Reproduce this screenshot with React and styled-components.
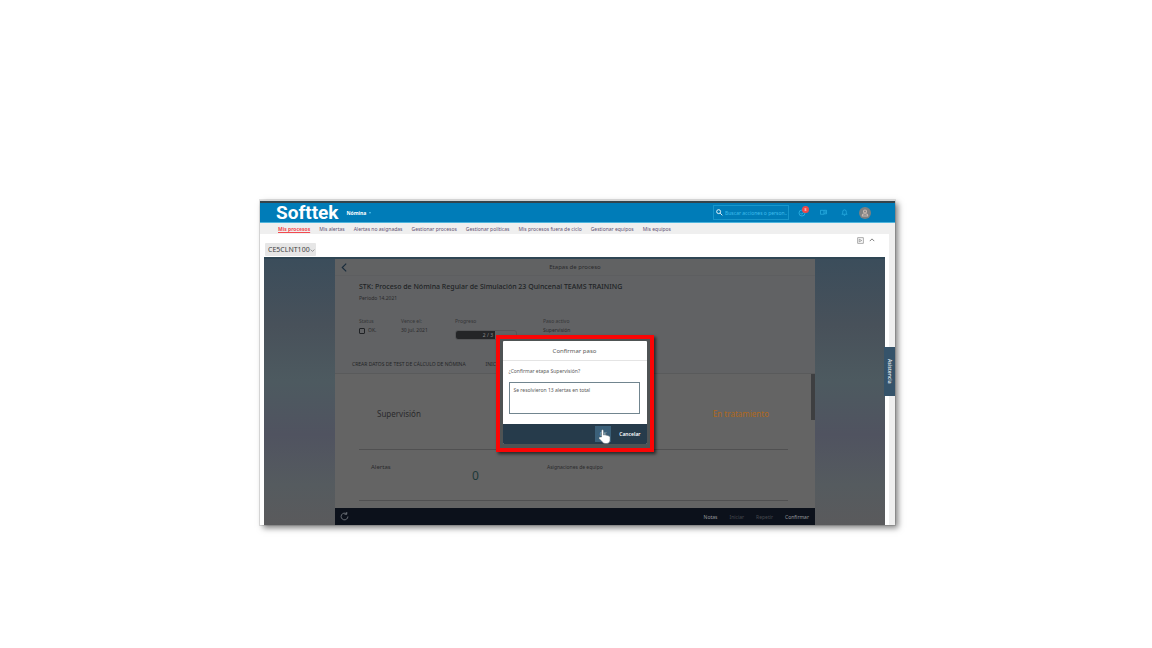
import React from "react";
import styled, { createGlobalStyle } from "styled-components";

const GlobalStyle = createGlobalStyle`
  * { box-sizing: border-box; }
  body { margin: 0; background: #fff; font-family: "Noto Sans", sans-serif; font-size: 5px; line-height: 8px; }
  button, input, textarea, select { font: inherit; color: inherit; margin: 0; }
  h1, h2, h3, p, dl, dd, dt { margin: 0; font-weight: 400; }
`;

const Page = styled.main`padding: 200px 257px 124px 260px;`;

const Frame = styled.div`
  position: relative;
  background: #efefef;
  border-top: 1px solid #d5d5d5;
  box-shadow: 3px 3px 6px rgba(0, 0, 0, 0.5), 0 0 0 1px #e4e4e4;
`;

const TopBar = styled.header`
  display: flex;
  align-items: center;
  height: 22px;
  padding: 0 25px 0 16px;
  border-top: 2px solid #35444c;
  border-bottom: 1px solid #4fb4dc;
  background: #007cb8;
  color: #fff;
`;

const Logo = styled.a`
  color: #fff;
  font: 700 19px/18px Roboto, sans-serif;
  text-decoration: none;
`;

const ModuleButton = styled.button`
  display: flex;
  align-items: center;
  gap: 3px;
  margin-left: 8px;
  padding: 0;
  border: 0;
  background: none;
  font-weight: 700;
  &::after {
    content: "";
    border: 1px solid transparent;
    border-top: 2px solid #55c5f0;
    border-bottom: 0;
  }
`;

const SearchBox = styled.label`
  display: flex;
  align-items: center;
  gap: 2px;
  width: 76px;
  height: 15px;
  margin-left: auto;
  padding: 0 1px 0 2px;
  border: 1px solid #1896cc;
  input {
    flex: 1;
    min-width: 0;
    padding: 0;
    border: 0;
    outline: 0;
    background: none;
  }
  input::placeholder { color: #3fbdec; opacity: 1; }
`;

const IconGroup = styled.div`
  display: flex;
  align-items: center;
  gap: 11px;
  margin-left: 8px;
`;

const IconButton = styled.button`
  position: relative;
  display: flex;
  align-items: center;
  justify-content: center;
  width: 10px;
  height: 12px;
  padding: 0;
  border: 0;
  background: none;
  color: ${(p) => p.$tone || "#2fb4e6"};
  svg { flex: none; }
`;

const Badge = styled.span`
  position: absolute;
  top: -1px;
  right: -2px;
  width: 7px;
  height: 7px;
  border-radius: 50%;
  background: #f04848;
  color: #fff;
  font-size: 4px;
  line-height: 7px;
`;

const MainNav = styled.nav`
  display: flex;
  gap: 9px;
  height: 11px;
  padding: 2px 18px;
`;

const NavLink = styled.a`
  color: ${(p) => (p.$active ? "#f24a50" : "#5f5273")};
  font-weight: ${(p) => (p.$active ? 700 : 400)};
  text-decoration: ${(p) => (p.$active ? "underline" : "none")};
  white-space: nowrap;
`;

const Content = styled.section`
  margin-right: 6px;
  padding-right: 4px;
  padding-left: 4px;
  background: #fff;
`;

const Tools = styled.div`
  display: flex;
  align-items: flex-end;
  justify-content: space-between;
  height: 23px;
  padding: 0 8px 1px 1px;
`;

const ClientSelect = styled.select`
  appearance: none;
  width: 51px;
  height: 13px;
  padding: 0 3px;
  border: 0;
  border-radius: 1px;
  background: #e6e6e6;
  color: #444;
  font-size: 7px;
  line-height: 13px;
`;

const SelectWrap = styled.label`
  position: relative;
  display: flex;
  svg { position: absolute; right: 1px; top: 5px; }
`;

const ToolButtons = styled.div`
  display: flex;
  align-self: flex-start;
  gap: 2px;
`;

const Workspace = styled.div`
  position: relative;
  padding: 0 70px 0 71px;
  border-top: 2px solid #2f4654;
  background: linear-gradient(#3b4d5b, #48515a 25%, #4d5a60 46%, #505360 66%, #555b5f 85%, #5a5a5c);
`;

const Panel = styled.article`
  background: #646464;
  color: #2a2a2c;
`;

const PanelBar = styled.header`
  display: grid;
  grid-template-columns: 10px 1fr 10px;
  align-items: center;
  height: 17px;
  padding: 0 4px;
  border-bottom: 1px solid #5d5e60;
  background: #616263;
  text-align: center;
  h2 { font-size: 6px; }
`;

const Summary = styled.div`
  height: 98px;
  padding: 5px 24px;
  background: #616264;
  h1 { font-size: 7px; font-weight: 500; line-height: 12px; color: #202225; }
  p { line-height: 10px; }
`;

const Facts = styled.dl`
  display: grid;
  grid-template-columns: 42px 54px 88px 1fr;
  margin-top: 14px;
  dt { color: #353638; }
  dt, dd { line-height: 9px; }
`;

const Status = styled.label`
  display: flex;
  align-items: center;
  gap: 3px;
  input {
    appearance: none;
    width: 6px;
    height: 6px;
    border: 1px solid #202225;
    border-radius: 1px;
  }
`;

const Progress = styled.div`
  width: 62px;
  height: 10px;
  margin-top: 4px;
  border: 1px solid #555658;
  border-radius: 3px;
  overflow: hidden;
  div {
    width: 65%;
    height: 100%;
    padding-right: 2px;
    background: #242527;
    color: #8a8b8d;
    line-height: 8px;
    text-align: right;
  }
`;

const Steps = styled.nav`
  display: flex;
  gap: 20px;
  height: 18px;
  margin-top: -18px;
  padding: 4px 17px;
  border-bottom: 1px solid #595a5b;
  a { color: #242527; text-decoration: none; white-space: nowrap; }
`;

const Details = styled.div`
  position: relative;
  height: 134px;
  padding: 0 27px 0 24px;
`;

const StageRow = styled.div`
  display: flex;
  align-items: center;
  justify-content: space-between;
  height: 76px;
  padding: 4px 19px 0 18px;
  border-bottom: 1px solid #505051;
  font-size: 8px;
  line-height: 12px;
  strong { color: #b0681a; font-weight: 400; }
`;

const AlertRow = styled.div`
  display: grid;
  grid-template-columns: 101px 75px 1fr;
  height: 51px;
  padding: 13px 12px 0;
  border-bottom: 1px solid #505051;
  h3 { font-size: 6px; }
  output { margin-top: 6px; color: #1d3838; font-size: 12px; line-height: 14px; }
`;

const ScrollThumb = styled.span`
  position: absolute;
  top: 0;
  right: 0;
  width: 4px;
  height: 46px;
  background: #3e3f41;
`;

const Footer = styled.footer`
  display: flex;
  align-items: center;
  gap: 12px;
  height: 17px;
  padding: 0 6px 0 4px;
  background: #0c111b;
  button:nth-child(2) { margin-left: auto; }
`;

const TextButton = styled.button`
  padding: 0;
  border: 0;
  background: none;
  color: ${(p) => (p.disabled ? "#484a50" : "#96989c")};
`;

const Highlight = styled.div`
  position: absolute;
  top: 76px;
  left: 50%;
  width: 158px;
  margin-left: -79px;
  padding: 2px 3px 4px;
  border: 4px solid #fb0505;
  background: #4e5354;
  box-shadow: 2px 2px 3px rgba(0, 0, 0, 0.6);
`;

const Dialog = styled.section`
  background: #fff;
  border-radius: 1px;
  color: #5a5a5a;
  overflow: hidden;
  h2 {
    height: 20px;
    border-bottom: 1px solid #e4e4e4;
    font-size: 6px;
    line-height: 20px;
    text-align: center;
  }
`;

const DialogBody = styled.div`
  height: 63px;
  padding: 6px 7px 6px 6px;
  label { display: block; }
  textarea {
    display: block;
    width: 100%;
    height: 32px;
    margin-top: 7px;
    padding: 3px 4px;
    border: 1px solid #71858f;
    outline: 0;
    background: #fff;
    resize: none;
  }
`;

const DialogActions = styled.div`
  display: flex;
  align-items: center;
  justify-content: flex-end;
  gap: 8px;
  height: 20px;
  padding: 0 6px;
  background: #263b4b;
  color: #fff;
`;

const DialogButton = styled.button`
  position: relative;
  height: 16px;
  padding: 0;
  border: 0;
  background: ${(p) => (p.$primary ? "#3b6079" : "none")};
  color: ${(p) => (p.$primary ? "#a9c4d6" : "#fff")};
  width: ${(p) => (p.$primary ? "16px" : "auto")};
  font-weight: ${(p) => (p.$primary ? 400 : 600)};
  svg { position: absolute; left: 3px; top: 3px; }
`;

const AlertsTab = styled.button`
  position: absolute;
  top: 146px;
  right: 0;
  display: flex;
  align-items: center;
  justify-content: center;
  width: 11px;
  height: 49px;
  padding: 0;
  border: 0;
  background: #35536a;
  color: #e8eef2;
  font-weight: 600;
  writing-mode: vertical-rl;
`;

const Svg = ({ size = 7, children, ...rest }) => (
  <svg width={size} height={size} viewBox="0 0 16 16" fill="none" stroke="currentColor" strokeWidth="1.6" aria-hidden="true" {...rest}>
    {children}
  </svg>
);

const navItems = ["Mis procesos", "Mis alertas", "Alertas no asignadas", "Gestionar procesos", "Gestionar políticas", "Mis procesos fuera de ciclo", "Gestionar equipos", "Mis equipos"];

const caretToEnd = (e) => e.target.setSelectionRange(e.target.value.length, e.target.value.length);

export default function App() {
  return (
    <Page>
      <GlobalStyle />
      <Frame>
        <TopBar>
          <Logo href="#">Softtek</Logo>
          <ModuleButton>Nómina</ModuleButton>
          <SearchBox>
            <Svg stroke="#fff" strokeWidth="2"><circle cx="6" cy="6" r="4.5" /><path d="m9.5 9.5 5 5" /></Svg>
            <input type="text" aria-label="Buscar" placeholder="Buscar acciones o person..." />
          </SearchBox>
          <IconGroup>
            <IconButton aria-label="Tareas"><Svg size={8}><circle cx="8" cy="8" r="6" /><path d="m5 8 2.500 2.500L11.500 6" /></Svg><Badge>3</Badge></IconButton>
            <IconButton aria-label="Mensajes"><Svg><path d="M1 3h8v9H1zM9 3h6v8H9M11 6h2M11 8h2" /></Svg></IconButton>
            <IconButton aria-label="Notificaciones"><Svg><path d="M2 12h12c-2-2-2-4-2-6a4 4 0 0 0-8 0c0 2 0 4-2 6zM6.500 14.500h3" /></Svg></IconButton>
            <IconButton aria-label="Perfil"><Svg size={12}><circle cx="8" cy="8" r="8" fill="#7d8082" stroke="none" /><circle cx="8" cy="6" r="2" stroke="#c9b8b0" /><path d="M4.500 12V11q0-2 3.500-2t3.500 2v1z" stroke="#c9b8b0" /></Svg></IconButton>
          </IconGroup>
        </TopBar>
        <MainNav>
          {navItems.map((item, i) => <NavLink key={item} href="#" $active={i === 0}>{item}</NavLink>)}
        </MainNav>
        <Content>
          <Tools>
            <SelectWrap>
              <ClientSelect aria-label="Cliente"><option>CE5CLNT100</option></ClientSelect>
              <Svg size={5} stroke="#666" strokeWidth="2"><path d="m2 5 6 6 6-6" /></Svg>
            </SelectWrap>
            <ToolButtons>
              <IconButton aria-label="Abrir" $tone="#858585"><Svg><path d="M1.500 1.500h13v13h-13zM5 5l6 3-6 3z" /></Svg></IconButton>
              <IconButton aria-label="Contraer" $tone="#777"><Svg size={6} strokeWidth="2.500"><path d="m2 11 6-6 6 6" /></Svg></IconButton>
            </ToolButtons>
          </Tools>
          <Workspace>
            <Panel>
              <PanelBar>
                <IconButton aria-label="Volver" $tone="#182b3b"><Svg size={9} strokeWidth="2"><path d="M11 1 4 8l7 7" /></Svg></IconButton>
                <h2>Etapas de proceso</h2>
              </PanelBar>
              <Summary>
                <h1>STK: Proceso de Nómina Regular de Simulación 23 Quincenal TEAMS TRAINING</h1>
                <p>Periodo 14.2021</p>
                <Facts>
                  <div><dt>Status</dt><dd><Status><input type="checkbox" />OK.</Status></dd></div>
                  <div><dt>Vence el:</dt><dd>30 jul. 2021</dd></div>
                  <div><dt>Progreso</dt><dd><Progress><div>2 / 3</div></Progress></dd></div>
                  <div><dt>Paso activo</dt><dd>Supervisión</dd></div>
                </Facts>
              </Summary>
              <Steps>
                <a href="#">CREAR DATOS DE TEST DE CÁLCULO DE NÓMINA</a>
                <a href="#">INICIAR</a>
              </Steps>
              <Details>
                <StageRow><span>Supervisión</span><strong>En tratamiento</strong></StageRow>
                <AlertRow><h3>Alertas</h3><output>0</output><p>Asignaciones de equipo</p></AlertRow>
                <ScrollThumb />
              </Details>
              <Footer>
                <IconButton aria-label="Actualizar" $tone="#777b82"><Svg size={9} strokeWidth="1.500"><path d="M14 8a6 6 0 1 1-2-4.500M12 0v4H8" /></Svg></IconButton>
                <TextButton>Notas</TextButton>
                <TextButton disabled>Iniciar</TextButton>
                <TextButton disabled>Repetir</TextButton>
                <TextButton>Confirmar</TextButton>
              </Footer>
            </Panel>
            <Highlight>
              <Dialog role="dialog" aria-labelledby="confirm-title">
                <h2 id="confirm-title">Confirmar paso</h2>
                <DialogBody>
                  <label htmlFor="note">¿Confirmar etapa Supervisión?</label>
                  <textarea id="note" autoFocus spellCheck={false} onFocus={caretToEnd} defaultValue="Se resolvieron 13 alertas en total" />
                </DialogBody>
                <DialogActions>
                  <DialogButton $primary>OK
                    <svg width="13" height="15" viewBox="0 0 13 15" aria-hidden="true"><path d="M3.500 8V2q0-1.500 1-1.500t1 1.500v4q2-.8 2.500.3 1.500-.5 2 .5 2-.3 2 1.500v3q0 3-3 3.200H7q-2 0-3-2L1 9.500q-.5-1.500.8-1.500z" fill="#fff" stroke="#55656f" strokeWidth=".5" /></svg>
                  </DialogButton>
                  <DialogButton>Cancelar</DialogButton>
                </DialogActions>
              </Dialog>
            </Highlight>
          </Workspace>
        </Content>
        <AlertsTab>Asistencia</AlertsTab>
      </Frame>
    </Page>
  );
}
